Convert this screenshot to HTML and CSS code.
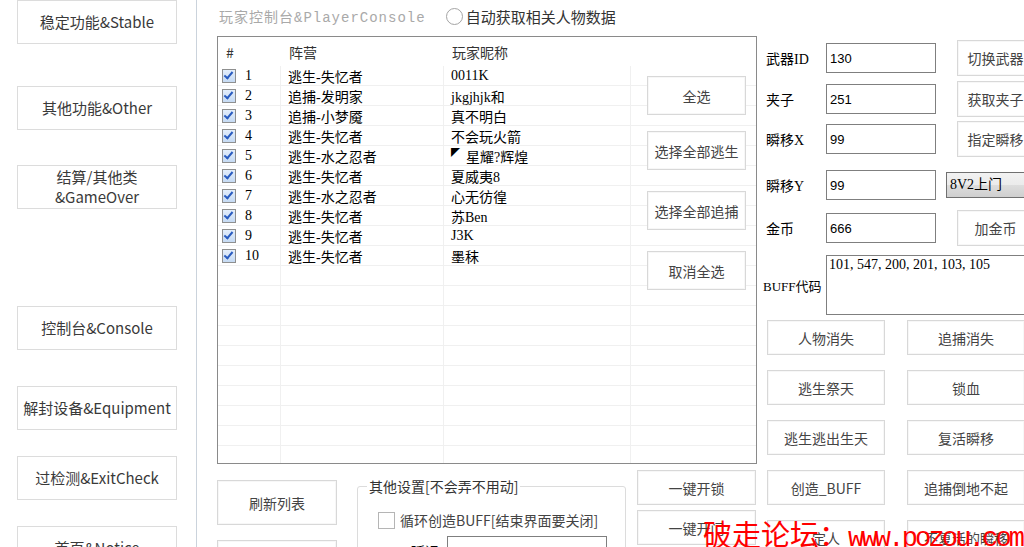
FILE: index.html
```html
<!DOCTYPE HTML>
<html>
<head>
  <meta charset="utf-8">
  <title>玩家控制台</title>
  <link rel="stylesheet" href="styles.css">
</head>
<body>
<nav class="side">
  <button class="nav-btn">稳定功能&amp;Stable</button>
  <button class="nav-btn g2">其他功能&amp;Other</button>
  <button class="nav-btn g3">结算/其他类<br>&amp;GameOver</button>
  <button class="nav-btn g4">控制台&amp;Console</button>
  <button class="nav-btn g5">解封设备&amp;Equipment</button>
  <button class="nav-btn g6">过检测&amp;ExitCheck</button>
  <button class="nav-btn g6">首页&amp;Notice</button>
</nav>
<main class="main">
  <section class="console">
    <div class="head">
      <span class="title">玩家控制台&amp;PlayerConsole</span>
      <label class="auto"><span class="radio"></span>自动获取相关人物数据</label>
    </div>
    <div class="list">
      <div class="list-head"><span>#</span><span>阵营</span><span>玩家昵称</span><span></span></div>
      <div class="row"><span><i class="chk"></i>1</span><span>逃生-失忆者</span><span>0011K</span><span></span></div>
      <div class="row"><span><i class="chk"></i>2</span><span>追捕-发明家</span><span>jkgjhjk和</span><span></span></div>
      <div class="row"><span><i class="chk"></i>3</span><span>追捕-小梦魇</span><span>真不明白</span><span></span></div>
      <div class="row"><span><i class="chk"></i>4</span><span>逃生-失忆者</span><span>不会玩火箭</span><span></span></div>
      <div class="row"><span><i class="chk"></i>5</span><span>逃生-水之忍者</span><span><b class="tri">◤</b>星耀?辉煌</span><span></span></div>
      <div class="row"><span><i class="chk"></i>6</span><span>逃生-失忆者</span><span>夏威夷8</span><span></span></div>
      <div class="row"><span><i class="chk"></i>7</span><span>逃生-水之忍者</span><span>心无彷徨</span><span></span></div>
      <div class="row"><span><i class="chk"></i>8</span><span>逃生-失忆者</span><span>苏Ben</span><span></span></div>
      <div class="row"><span><i class="chk"></i>9</span><span>逃生-失忆者</span><span>J3K</span><span></span></div>
      <div class="row"><span><i class="chk"></i>10</span><span>逃生-失忆者</span><span>墨秣</span><span></span></div>
      <div class="row"><span></span><span></span><span></span><span></span></div>
      <div class="row"><span></span><span></span><span></span><span></span></div>
      <div class="row"><span></span><span></span><span></span><span></span></div>
      <div class="row"><span></span><span></span><span></span><span></span></div>
      <div class="row"><span></span><span></span><span></span><span></span></div>
      <div class="row"><span></span><span></span><span></span><span></span></div>
      <div class="row"><span></span><span></span><span></span><span></span></div>
      <div class="row"><span></span><span></span><span></span><span></span></div>
      <div class="row"><span></span><span></span><span></span><span></span></div>
      <div class="row"><span></span><span></span><span></span><span></span></div>
      <div class="pick">
        <button class="btn">全选</button>
        <button class="btn">选择全部逃生</button>
        <button class="btn">选择全部追捕</button>
        <button class="btn">取消全选</button>
      </div>
    </div>
    <div class="bottom">
      <div class="col-a">
        <button class="btn">刷新列表</button>
        <button class="btn">自动刷新</button>
      </div>
      <fieldset class="other">
        <legend>其他设置[不会弄不用动]</legend>
        <label class="loop"><span class="box"></span>循环创造BUFF[结束界面要关闭]</label>
        <div class="delay"><span class="song">BUFF延迟</span><input class="txt" value="300"></div>
      </fieldset>
      <div class="col-c">
        <button class="btn">一键开锁</button>
        <button class="btn">一键开门</button>
      </div>
    </div>
  </section>
  <section class="tools">
    <div class="field f1"><label class="song">武器ID</label><input class="txt" value="130"><button class="btn act">切换武器</button></div>
    <div class="field f2"><label class="song">夹子</label><input class="txt" value="251"><button class="btn act">获取夹子</button></div>
    <div class="field f3"><label class="song">瞬移X</label><input class="txt" value="99"><button class="btn act">指定瞬移</button></div>
    <div class="field f4"><label class="song">瞬移Y</label><input class="txt" value="99"><div class="combo song">8V2上门</div></div>
    <div class="field f5"><label class="song">金币</label><input class="txt" value="666"><button class="btn act">加金币</button></div>
    <div class="field buff"><label class="song">BUFF代码</label><textarea class="area song">101, 547, 200, 201, 103, 105</textarea></div>
    <div class="ops">
      <button class="btn">人物消失</button>
      <button class="btn">追捕消失</button>
      <button class="btn">逃生祭天</button>
      <button class="btn">锁血</button>
      <button class="btn">逃生逃出生天</button>
      <button class="btn">复活瞬移</button>
      <button class="btn">创造_BUFF</button>
      <button class="btn">追捕倒地不起</button>
      <button class="btn">定人</button>
      <button class="btn">不复活的瞬移</button>
    </div>
  </section>
</main>
<div class="mark"><span class="mark-cn">破走论坛：</span>www.pozou.com</div>
</body>
</html>
```
FILE: styles.css
```css
/*页面初始化*/
body{margin:0;padding:0;display:flex;height:547px;overflow:hidden;background:#fff;font:14px "Noto Sans CJK SC","Noto Sans",sans-serif;color:#333;}
button{font:inherit;color:inherit;margin:0;padding:0;}
.song{font-family:"Liberation Serif","Noto Sans CJK SC",serif;color:#000;}

/*1.左侧导航*/
.side{
	flex:none;
	display:flex;
	flex-direction:column;
	width:197px;
	height:100%;
	padding-left:17px;
	box-sizing:border-box;
	border-right:1px solid #cbd3dc;
}
.nav-btn{
	flex:none;
	width:160px;
	height:44px;
	background:#fff;
	border:1px solid #dcdcdc;
	font-size:15px;
	line-height:20px;
	color:#3a3a3a;
}
.g2{margin-top:42px;}
.g3{margin-top:35px;}
.g4{margin-top:97px;}
.g5{margin-top:36px;}
.g6{margin-top:26px;}

/*通用按钮*/
.btn{
	background:#fff;
	border:1px solid #d8d8d8;
	box-shadow:inset 0 0 0 1px #f7f7f7;
	color:#444;
	white-space:nowrap;
}

/*2.控制台区域*/
.main{flex:none;display:flex;padding-left:20px;}
.console{width:540px;display:flex;flex-direction:column;}
/*2-1.标题*/
.head{
	flex:none;
	display:flex;
	align-items:center;
	height:36px;
	padding-bottom:4px;
	box-sizing:border-box;
}
.title{
	margin-left:2px;
	font-family:"Liberation Mono","Noto Sans CJK SC",monospace;
	letter-spacing:1px;
	color:#a9a9a9;
}
.auto{display:flex;align-items:center;margin-left:20px;font-size:15px;color:#333;}
.radio{
	width:15px;
	height:15px;
	margin-right:3px;
	border:1px solid #a4a4a4;
	border-radius:50%;
	background:#fff;
}
/*2-2.玩家列表*/
.list{
	flex:none;
	position:relative;
	height:428px;
	border:1px solid #8a8a8a;
	box-sizing:border-box;
	overflow:hidden;
}
.list-head,.row{
	display:grid;
	grid-template-columns:63px 163px 187px 1fr;
}
.list-head{height:29px;align-items:center;color:#333;}
.list-head span{padding-left:8px;}
.row{height:20px;border-bottom:1px solid #f0f0f0;box-sizing:border-box;}
.row>span{
	display:flex;
	align-items:center;
	padding-left:7px;
	border-right:1px solid #f0f0f0;
	font-family:"Liberation Serif","Noto Sans CJK SC",serif;
	color:#000;
	white-space:nowrap;
	overflow:hidden;
}
.row>span:first-child{padding-left:4px;}
.row>span:last-child{border-right:0;}
.tri{font-size:9px;font-weight:normal;margin:-6px 6px 0 0;}
.chk{
	position:relative;
	flex:none;
	width:12px;
	height:12px;
	margin-right:9px;
	border:1px solid #8e8f8f;
	background:linear-gradient(#e4eefb,#c5daf3);
}
.chk::after{
	content:"";
	position:absolute;
	left:3px;
	top:0;
	width:3px;
	height:7px;
	border-right:2px solid #2a5cc0;
	border-bottom:2px solid #2a5cc0;
	transform:rotate(40deg);
}
/*2-3.列表上的选择按钮*/
.pick{
	position:absolute;
	left:429px;
	top:39px;
	display:flex;
	flex-direction:column;
}
.pick .btn{width:99px;height:39px;}
.pick .btn+.btn{margin-top:16px;}
.pick .btn:nth-child(n+3){margin-top:21px;}
/*2-4.底部*/
.bottom{display:flex;flex:none;}
.col-a{width:120px;flex:none;display:flex;flex-direction:column;}
.col-a .btn{flex:none;height:45px;margin-top:16px;}
.col-a .btn+.btn{margin-top:15px;}
.other{
	flex:none;
	width:269px;
	height:100px;
	margin:12px 0 0 20px;
	padding:0 0 0 9px;
	box-sizing:border-box;
	border:1px solid #dcdcdc;
	border-radius:3px;
}
.other legend{padding:0 2px;line-height:20px;color:#333;}
.loop{display:flex;align-items:center;height:20px;margin:14px 0 0 11px;color:#444;}
.box{width:15px;height:15px;margin-right:5px;border:1px solid #b5b5b5;background:#fff;}
.delay{display:flex;align-items:center;margin:6px 0 0 9px;}
.delay .txt{margin-left:8px;width:160px;}
.col-c{width:119px;margin-left:11px;flex:none;display:flex;flex-direction:column;}
.col-c .btn{flex:none;height:35px;margin-top:6px;}
.col-c .btn+.btn{margin-top:5px;}

/*3.右侧工具*/
.tools{flex:none;width:300px;margin-left:9px;display:flex;flex-direction:column;}
.field{display:flex;align-items:center;height:36px;flex:none;}
.field label{width:60px;flex:none;font-size:14px;white-space:nowrap;}
.txt{
	flex:none;
	width:110px;
	height:30px;
	padding:0 3px;
	box-sizing:border-box;
	border:1px solid #7f7f7f;
	font:13px "Liberation Sans",sans-serif;
	color:#000;
}
.act{flex:none;width:77px;height:36px;margin-left:21px;}
.combo{
	flex:none;
	width:80px;
	height:26px;
	margin-left:10px;
	padding-left:3px;
	box-sizing:border-box;
	border:1px solid #707070;
	background:linear-gradient(#f2f2f2 0%,#ebebeb 50%,#dddddd 51%,#cfcfcf 100%);
	line-height:24px;
}
.f1{margin-top:40px;}
.f2{margin-top:5px;}
.f3{margin-top:4px;}
.f4{margin-top:10px;}
.f5{margin-top:7px;}
.buff{height:60px;margin-top:9px;}
.buff label{margin-left:-3px;width:63px;font-size:13px;}
.area{
	flex:none;
	width:210px;
	height:60px;
	padding:1px 2px;
	box-sizing:border-box;
	border:1px solid #7f7f7f;
	font-size:14px;
	resize:none;
}
.ops{
	display:grid;
	grid-template-columns:118px 118px;
	column-gap:22px;
	row-gap:15px;
	margin:5px 0 0 1px;
}
.ops .btn{height:35px;}

/*4.水印*/
.mark{
	position:absolute;
	left:703px;
	top:512px;
	color:#f00;
	font:27px "Liberation Mono",monospace;
	letter-spacing:-2.8px;
	line-height:34px;
	white-space:nowrap;
}
.mark-cn{font:29px "Noto Sans CJK SC",sans-serif;letter-spacing:0;}
```
